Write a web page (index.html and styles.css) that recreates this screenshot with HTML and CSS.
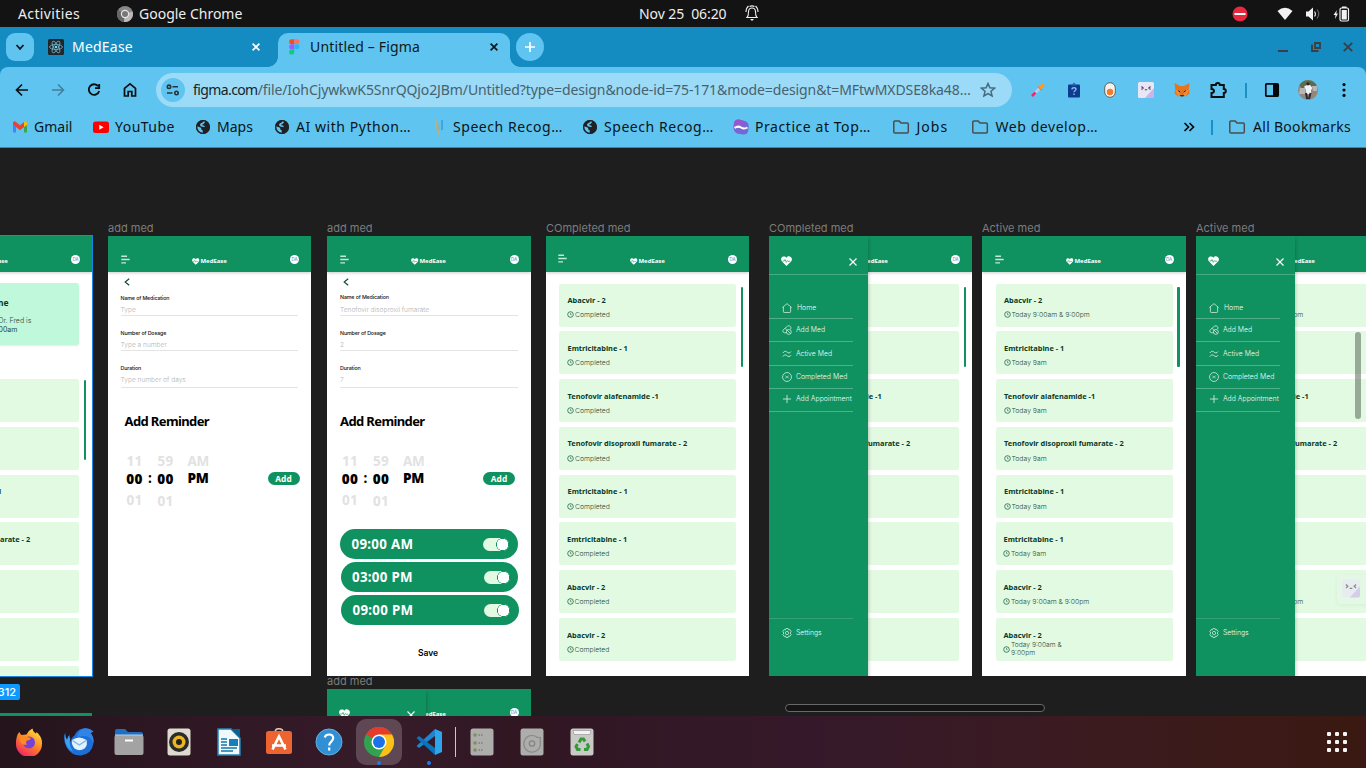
FILE: index.html
```
<!DOCTYPE html>
<html lang="en">
<head>
<meta charset="utf-8">
<title>Untitled – Figma</title>
<link rel="stylesheet" href="styles.css">
</head>
<body>
<svg class="defs" width="0" height="0" aria-hidden="true">
  <symbol id="heart" viewBox="0 0 12 11"><path d="M6 10.7 1.1 5.9C-.4 4 0 1.6 1.6.7 3.2-.2 5 .3 6 1.7 7-.3 9.2-.2 10.6.8c1.500 1 1.800 3.300.4 5z" fill="#fff"/><path d="M1.500 5.200h2l.9-1.700 1.300 3.200 1.200-2 .6.8h2.600" fill="none" stroke="#109160" stroke-width=".7"/></symbol>
  <symbol id="lines" viewBox="0 0 9 9"><path d="M.3 1.200h5.700M.3 4.500h8.400M.3 7.900h4.700" stroke="#c4e9d6" stroke-width="1.400" fill="none"/></symbol>
  <symbol id="clock" viewBox="0 0 7 7"><circle cx="3.500" cy="3.500" r="2.800" fill="none" stroke="#1f6347" stroke-width=".8"/><path d="M3.500 1.900v1.800h1.200" fill="none" stroke="#1f6347" stroke-width=".6"/></symbol>
  <symbol id="close" viewBox="0 0 8 8"><path d="m.5.5 7 7m0-7-7 7" stroke="#fff" stroke-width="1.200" fill="none"/></symbol>
  <symbol id="m-home" viewBox="0 0 11 11"><path d="M.4 5 5.500.7 10.600 5M1.500 4.200v5.300q0 .9.900.9h6.200q.9 0 .9-.9V4.200" fill="none" stroke="#d9f1e4" stroke-width=".85"/></symbol>
  <symbol id="m-pill" viewBox="0 0 11 11"><path d="M5 8.300q-2 1-3.500-.3-1.500-1.600.2-3L6.200 1.200q1.700-1 3 .4t.2 3M3.500 3.600l2.300 2.600" fill="none" stroke="#d9f1e4" stroke-width=".85"/><circle cx="7.500" cy="7.600" r="2.700" fill="none" stroke="#d9f1e4" stroke-width=".85"/><path d="m5.700 5.700 3.700 3.700" stroke="#d9f1e4" stroke-width=".8"/></symbol>
  <symbol id="m-wave" viewBox="0 0 11 11"><path d="M1 4.300C3 1.200 5 3 6 3.700s2.500 1.200 4-.9M1 8.300c2-3.100 4-1.300 5-.6s2.500 1.200 4-.9" fill="none" stroke="#d9f1e4" stroke-width=".95"/></symbol>
  <symbol id="m-done" viewBox="0 0 11 11"><circle cx="5.500" cy="5.500" r="4.900" fill="none" stroke="#d9f1e4" stroke-width=".85"/><path d="m3.700 4 1.500 1.500L3.700 7m3.600-3L5.800 5.500 7.300 7" fill="none" stroke="#d9f1e4" stroke-width=".8"/></symbol>
  <symbol id="m-plus" viewBox="0 0 11 11"><path d="M5.500 1v9M1 5.500h9" stroke="#d9f1e4" stroke-width=".9"/></symbol>
  <symbol id="m-gear" viewBox="0 0 11 11"><path d="m4.300.6 2.400 0 .5 1.500 1.600-.3 1.300 2-1.100 1.700 1.100 1.600-1.300 2.100-1.600-.4-.5 1.600H4.300l-.5-1.600-1.600.4L.9 7.100 2 5.500.9 3.800l1.300-2 1.600.3z" fill="none" stroke="#d9f1e4" stroke-width=".8"/><circle cx="5.500" cy="5.500" r="1.800" fill="none" stroke="#d9f1e4" stroke-width=".8"/></symbol>
  <symbol id="globe" viewBox="0 0 16 16"><circle cx="8" cy="8" r="7" fill="#202124"/><path d="M9.800 2.700C8.300 3 8.700 4 7.700 4.500S5.500 5 6 6.300s3 .1 3.300 1.400" fill="none" stroke="#5fc4f0" stroke-width="1.700"/><path d="M1.800 7.200 5.500 8.500q1.200.7.700 2l1.500.8v2.900A6.500 6.500 0 0 1 1.800 9z" fill="#5fc4f0"/><path d="M10 7.200q3.500-1.200 4.300.8-.3 3-2.300 4.600-.2-1.500-1.700-1.700z" fill="#202124"/><circle cx="8" cy="8" r="6.300" fill="none" stroke="#202124" stroke-width="1.300"/></symbol>
  <symbol id="folder" viewBox="0 0 18 16"><path d="M1.800 13V3q0-1 1-1h4.400l1.800 2h6.300q1 0 1 1v8q0 1-1 1H2.800q-1 0-1-1z" fill="none" stroke="#4d4d4d" stroke-width="1.500"/></symbol>
  <symbol id="face" viewBox="0 0 16 16"><rect width="16" height="16" rx="1.500" fill="#e9e6f6"/><path d="M16 6v8.500a1.500 1.500 0 0 1-1.500 1.500H7z" fill="#b488e0" opacity=".55"/><path d="m3.500 4.500 1.700 1.500-1.700 1.500M12.500 4.500 10.800 6l1.700 1.500M6.800 7.800h2.400" fill="none" stroke="#474554" stroke-width="1.100"/></symbol>
</svg>

<header class="topbar">
  <div class="top-left">
    <span class="activities">Activities</span>
    <svg width="16" height="16" viewBox="0 0 16 16"><circle cx="8" cy="8" r="8" fill="#888"/><path d="M8 8 1 4a8 8 0 0 0 5.500 12z" fill="#666"/><path d="M8 8l7.500-2.500A8 8 0 0 1 7 16z" fill="#b9b9b9"/><circle cx="8" cy="8" r="4.200" fill="#e8e8e8"/><circle cx="8" cy="8" r="3" fill="#777"/></svg>
    <span class="app-name">Google Chrome</span>
  </div>
  <div class="top-mid"><span>Nov 25&nbsp; 06:20</span>
    <svg width="14" height="16" viewBox="0 0 14 16"><path d="M2 12.500c1.500-1.500 1.500-3 1.500-5.500C3.500 4 5 3 7 3s3.500 1 3.500 4c0 2.500 0 4 1.500 5.500zM1 7c0-3 1-4.800 2.500-6M13 7c0-3-1-4.800-2.500-6M4.500 1.600q2.500-1.400 5 0" fill="none" stroke="#eee" stroke-width="1.100"/><path d="M5 14h4l-2 2z" fill="#eee"/></svg>
  </div>
  <div class="top-right">
    <svg width="16" height="16" viewBox="0 0 16 16"><circle cx="8" cy="8" r="7.500" fill="#e6293f"/><path d="M2.500 8h11" stroke="#fff" stroke-width="2"/></svg>
    <svg class="wifi" width="16" height="14" viewBox="0 0 16 14"><path d="M.5 4Q8-2.500 15.500 4L8 13z" fill="#f2f2f2"/></svg>
    <svg class="vol" width="16" height="14" viewBox="0 0 16 14"><path d="M1 4.500h2.500L8 .5v13L3.500 9.500H1z" fill="#f2f2f2"/><path d="M9.500 4.500q2 2.500 0 5" fill="none" stroke="#ddd" stroke-width="1.200"/><path d="M12 2.500q3.500 4.500 0 9" fill="none" stroke="#666" stroke-width="1.200"/></svg>
    <svg class="batt" width="17" height="16" viewBox="0 0 17 16"><path d="M4 4 .5 9h2L2 13l3-5.500H3.200z" fill="#f2f2f2"/><rect x="7" y="2" width="8.500" height="13" rx="1.500" fill="none" stroke="#f2f2f2" stroke-width="1.200"/><path d="M9 .5h4.500v1.500H9zM8.700 4h5.100v9.500H8.700z" fill="#f2f2f2"/></svg>
  </div>
</header>

<div class="tabstrip">
  <div class="tab-search"><svg width="12" height="12" viewBox="0 0 12 12"><path d="m2.500 4 3.500 3.800L9.500 4" fill="none" stroke="#0b1a20" stroke-width="1.800"/></svg></div>
  <div class="tab">
    <svg width="16" height="16" viewBox="0 0 16 16"><rect width="16" height="16" rx="1.500" fill="#22262b"/><g fill="none" stroke="#6fb6cc" stroke-width=".8"><ellipse cx="8" cy="8" rx="6.500" ry="2.500"/><ellipse cx="8" cy="8" rx="6.500" ry="2.500" transform="rotate(60 8 8)"/><ellipse cx="8" cy="8" rx="6.500" ry="2.500" transform="rotate(120 8 8)"/></g><circle cx="8" cy="8" r="1.300" fill="#7ed4ee"/></svg>
    <span class="tab-title medease">MedEase</span>
    <svg width="8" height="8" viewBox="0 0 8 8"><path d="m.6.6 6.800 6.800m0-6.800L.6 7.400" stroke="#fff" stroke-width="1.600"/></svg>
  </div>
  <div class="tab active">
    <svg width="11" height="16" viewBox="0 0 11 16"><path d="M2.700.3h2.600v5H2.700a2.500 2.500 0 0 1 0-5z" fill="#f24e1e"/><path d="M5.300.3H8a2.500 2.500 0 0 1 0 5H5.300z" fill="#ff7262"/><path d="M2.700 5.300h2.600v5H2.700a2.500 2.500 0 0 1 0-5z" fill="#a259ff"/><circle cx="7.900" cy="7.800" r="2.500" fill="#1abcfe"/><path d="M2.700 10.300h2.600v2.600a2.600 2.600 0 1 1-2.600-2.600z" fill="#0acf83"/></svg>
    <span class="tab-title figma">Untitled – Figma</span>
    <svg width="8" height="8" viewBox="0 0 8 8"><path d="m.6.6 6.800 6.800m0-6.800L.6 7.400" stroke="#0b1a20" stroke-width="1.700"/></svg>
  </div>
  <div class="new-tab"><svg width="10" height="10" viewBox="0 0 10 10"><path d="M5 0v10M0 5h10" stroke="#fff" stroke-width="1.700"/></svg></div>
  <div class="win">
    <svg width="10" height="10" viewBox="0 0 10 10"><path d="M0 9h10" stroke="#3a3f44" stroke-width="2"/></svg>
    <svg width="10" height="10" viewBox="0 0 10 10"><path d="M4 1h5v5H4zM1 2.500V9h6.500" fill="none" stroke="#3a3f44" stroke-width="1.800"/></svg>
    <svg width="10" height="10" viewBox="0 0 10 10"><path d="m.8.8 8.400 8.400m0-8.400L.8 9.200" stroke="#3a3f44" stroke-width="1.900"/></svg>
  </div>
</div>

<div class="chrome">
  <div class="toolbar">
    <svg class="tool" viewBox="0 0 16 16"><path d="M14 8H2.800M8 2.500 2.500 8 8 13.500" fill="none" stroke="#0a0f12" stroke-width="1.700"/></svg>
    <svg class="tool" viewBox="0 0 16 16"><path d="M2 8h11.200M8 2.500 13.500 8 8 13.500" fill="none" stroke="#417e9b" stroke-width="1.500"/></svg>
    <svg class="tool" viewBox="0 0 16 16"><path d="M12.300 4.300A5.300 5.300 0 1 0 13.200 9M13.200 2v4.200H9" fill="none" stroke="#0a0f12" stroke-width="1.800"/></svg>
    <svg class="tool" viewBox="0 0 16 16"><path d="M2.500 14V6.300L8 1.800l5.500 4.500V14h-3.700V9.500H6.200V14z" fill="none" stroke="#0a0f12" stroke-width="1.700"/></svg>
    <div class="omnibox">
      <div class="site"><svg width="14" height="12" viewBox="0 0 14 12"><g fill="none" stroke="#26343c" stroke-width="1.600"><circle cx="3" cy="2.800" r="1.700"/><path d="M6.500 2.800H12M1 9h5.500"/><circle cx="10.500" cy="9" r="1.700"/></g></svg></div>
      <div class="url"><b>figma.com</b><span>/file/IohCjywkwK5SnrQQjo2JBm/Untitled?type=design&amp;node-id=75-171&amp;mode=design&amp;t=MFtwMXDSE8ka48…</span></div>
      <svg class="star" width="16" height="16" viewBox="0 0 16 16"><path d="m8 1.500 1.900 4.300 4.700.4-3.600 3.100 1.100 4.600L8 11.500l-4.100 2.400L5 9.300 1.400 6.200l4.700-.4z" fill="none" stroke="#466a7c" stroke-width="1.500"/></svg>
    </div>
    <div class="exts">
      <svg class="tool" viewBox="0 0 16 16"><path d="m4 12 5.500-5.500" stroke="#a9d3f7" stroke-width="3"/><path d="m2 14 3.500-3.500" stroke="#ec2a6a" stroke-width="2.600"/><path d="m8.300 4.500 3.500 3.500" stroke="#f2793a" stroke-width="2"/><path d="m10.800 5.200 1.900-1.900" stroke="#ff9a1f" stroke-width="3.600" stroke-linecap="round"/></svg>
      <svg class="tool" viewBox="0 0 16 16"><rect x="2" y="2.500" width="12" height="13" rx="1" fill="#0c3c8e"/><path d="M5 3.500 8 .5l3 3z" fill="#2e66b8"/><path d="M6 7.500q0-1.700 2-1.700t2 1.500c0 1.400-2 1.500-2 3M8 11.500v1.500" stroke="#8db6ef" stroke-width="1.400" fill="none"/></svg>
      <svg class="tool" viewBox="0 0 16 16"><rect x="2.700" y=".7" width="10.600" height="14.600" rx="5.300" fill="#f4f2ef" stroke="#66625f" stroke-width="1"/><circle cx="8" cy="10" r="3.200" fill="#f47b2a"/></svg>
      <svg class="tool"><use href="#face"/></svg>
      <svg class="tool" viewBox="0 0 16 16"><path d="M.5 1 6 4h4l5.500-3-.7 6.500.7 4L12 14.500 10 14H6l-2 .5L.5 11.500l.7-4z" fill="#e5761f"/><path d="M1.200 7.500 5 9l1 4-2 1.500M14.800 7.500 11 9l-1 4 2 1.500" fill="#f28c38"/><path d="m4 8.500 2.200 1.500M12 8.500 9.800 10" stroke="#3a2a1c"/><path d="M6 13h4l-.7 1.500H6.700z" fill="#3b2c22"/></svg>
      <svg class="tool puzzle" viewBox="0 0 18 18"><path d="M2.500 4h4.300a2 2 0 1 1 4 0h4v4a2 2 0 1 1 0 4v4H2.500v-4q2.500-.3 2.500-2t-2.500-2z" fill="none" stroke="#0a0f12" stroke-width="2"/></svg>
    </div>
    <i class="sep"></i>
    <svg class="tool side" viewBox="0 0 16 16"><rect x="1.800" y="1.800" width="12.400" height="12.400" rx="1" fill="none" stroke="#05090b" stroke-width="1.700"/><path d="M9 2h5v12H9z" fill="#05090b"/></svg>
    <svg class="me" width="20" height="20" viewBox="0 0 20 20"><circle cx="10" cy="10" r="10" fill="#93877c"/><path d="M1.500 5a10 10 0 0 1 17 0L16 9H4z" fill="#5b6c50"/><path d="M2 8h5v6H1zM14 6h5v5h-4z" fill="#b9b4b7"/><path d="m6 6.500 3-1.500h3l2.500 3-1.500 2v4H8l-.3-4.500z" fill="#eef2f5"/><circle cx="10" cy="3.800" r="1.600" fill="#33261f"/><path d="m8 13 1.200 6M12.500 13l-1.500 6" stroke="#262a35" stroke-width="2"/></svg>
    <svg class="tool" viewBox="0 0 16 16"><g fill="#05090b"><circle cx="8" cy="2.600" r="1.600"/><circle cx="8" cy="8" r="1.600"/><circle cx="8" cy="13.400" r="1.600"/></g></svg>
  </div>
  <nav class="bookmarks">
    <a class="bk gmail"><svg viewBox="0 0 16 16"><path d="M1 3.500v10h3V8z" fill="#4285f4"/><path d="M15 3.500v10h-3V8z" fill="#34a853"/><path d="M1 5V3.500Q2.500 1.500 4 3l4 3.200L12 3v5l-4 3.200L4 8z" fill="#ea4335"/><path d="M12 3q2-1.500 3 .7V6l-3 2z" fill="#fbbc04"/></svg>Gmail</a>
    <a class="bk yt"><svg viewBox="0 0 16 16"><rect y="2.500" width="16" height="11.500" rx="2.500" fill="#f00"/><path d="M6.300 5.700v5l4.300-2.500z" fill="#fff"/></svg>YouTube</a>
    <a class="bk maps"><svg><use href="#globe"/></svg>Maps</a>
    <a class="bk long"><svg><use href="#globe"/></svg>AI with Python…</a>
    <a class="bk long"><svg viewBox="0 0 16 16"><path d="M5 1v9M8 6v10" stroke="#d6aa63" stroke-width="1.400"/><path d="M8 6v5" stroke="#8bb1a8" stroke-width="1.400"/><path d="M11 1v10" stroke="#2b9ddb" stroke-width="1.400"/></svg>Speech Recog…</a>
    <a class="bk long"><svg><use href="#globe"/></svg>Speech Recog…</a>
    <a class="bk long"><svg viewBox="0 0 16 16"><path d="M1 4Q2 0 6 .5l7 2Q16 4 15.700 8l-.5 4Q14 16 10 15.500l-6-1Q1 13 .5 9z" fill="#7467d6"/><path d="M1 4Q2 0 6 .5l7 2-5 4.500-7.500 2z" fill="#9658cf"/><path d="M1.500 9q3.500-2.500 6.500-.5t6.500 0" stroke="#fff" stroke-width="2" fill="none"/></svg>Practice at Top…</a>
    <a class="bk dir jobs"><svg><use href="#folder"/></svg>Jobs</a>
    <a class="bk dir long"><svg><use href="#folder"/></svg>Web develop…</a>
    <svg class="more" viewBox="0 0 12 12"><path d="m1.500 2 4 4-4 4M6.500 2l4 4-4 4" fill="none" stroke="#05090b" stroke-width="1.700"/></svg>
    <i class="sep"></i>
    <a class="bk dir all"><svg><use href="#folder"/></svg>All Bookmarks</a>
  </nav>
</div>

<main class="canvas">
  <!-- selected frame, mostly scrolled out to the left -->
  <section class="frame f0">
    <div class="bar"><span></span><span class="brand"><svg><use href="#heart"/></svg>MedEase</span><span class="ava">DA</span></div>
    <div class="notice"><h4>ne</h4><p>Dr. Fred is</p><p class="time">00am</p></div>
    <div class="list low">
      <article></article><article></article><article><h3>Tenofovir alafenamide -1</h3></article><article><h3>Tenofovir disoproxil fumarate - 2</h3></article><article></article><article></article><article></article>
    </div>
    <i class="thumb"></i>
  </section>
  <span class="badge">312</span>
  <i class="frame f8"></i>

  <span class="name n1">add med</span>
  <section class="frame f1">
    <div class="bar"><svg class="burger"><use href="#lines"/></svg><span class="brand"><svg><use href="#heart"/></svg>MedEase</span><span class="ava">DA</span></div>
    <div class="form">
      <svg class="back" viewBox="0 0 6 8"><path d="M5.200.8 1.200 4l4 3.200" fill="none" stroke="#174a36" stroke-width="1.200"/></svg>
      <label class="field"><b>Name of Medication</b><span>Type</span></label>
      <label class="field"><b>Number of Dosage</b><span>Type a number</span></label>
      <label class="field last"><b>Duration</b><span>Type number of days</span></label>
      <h2>Add Reminder</h2>
      <div class="picker">
        <div class="col"><s>11</s><b>00</b><s>01</s></div><div class="colon">:</div>
        <div class="col"><s>59</s><b>00</b><s class="dn">01</s></div>
        <div class="col ap"><s>AM</s><b>PM</b></div><span class="add">Add</span>
      </div>
    </div>
  </section>

  <span class="name n2">add med</span>
  <section class="frame f2">
    <div class="bar"><svg class="burger"><use href="#lines"/></svg><span class="brand"><svg><use href="#heart"/></svg>MedEase</span><span class="ava">DA</span></div>
    <div class="form">
      <svg class="back" viewBox="0 0 6 8"><path d="M5.200.8 1.200 4l4 3.200" fill="none" stroke="#174a36" stroke-width="1.200"/></svg>
      <label class="field"><b>Name of Medication</b><span>Tenofovir disoproxil fumarate</span></label>
      <label class="field"><b>Number of Dosage</b><span>2</span></label>
      <label class="field last"><b>Duration</b><span>7</span></label>
      <h2>Add Reminder</h2>
      <div class="picker">
        <div class="col"><s>11</s><b>00</b><s>01</s></div><div class="colon">:</div>
        <div class="col"><s>59</s><b>00</b><s class="dn">01</s></div>
        <div class="col ap"><s>AM</s><b>PM</b></div><span class="add">Add</span>
      </div>
      <div class="alarms">
        <div class="alarm">09:00 AM<i></i></div><div class="alarm">03:00 PM<i></i></div><div class="alarm">09:00 PM<i></i></div>
      </div>
      <div class="save">Save</div>
    </div>
  </section>

  <span class="name n3">COmpleted med</span>
  <section class="frame f3">
    <div class="bar"><svg class="burger up"><use href="#lines"/></svg><span class="brand"><svg><use href="#heart"/></svg>MedEase</span><span class="ava">DA</span></div>
    <div class="list">
      <article><h3>Abacvir - 2</h3><p><svg><use href="#clock"/></svg>Completed</p></article>
      <article><h3>Emtricitabine - 1</h3><p><svg><use href="#clock"/></svg>Completed</p></article>
      <article><h3>Tenofovir alafenamide -1</h3><p><svg><use href="#clock"/></svg>Completed</p></article>
      <article><h3>Tenofovir disoproxil fumarate - 2</h3><p><svg><use href="#clock"/></svg>Completed</p></article>
      <article><h3>Emtricitabine - 1</h3><p><svg><use href="#clock"/></svg>Completed</p></article>
      <article class="nudge"><h3>Emtricitabine - 1</h3><p><svg><use href="#clock"/></svg>Completed</p></article>
      <article class="nudge"><h3>Abacvir - 2</h3><p><svg><use href="#clock"/></svg>Completed</p></article>
      <article class="nudge"><h3>Abacvir - 2</h3><p><svg><use href="#clock"/></svg>Completed</p></article>
    </div>
    <i class="thumb"></i>
  </section>

  <span class="name n4">COmpleted med</span>
  <section class="frame f4">
    <div class="bar"><span></span><span class="brand"><svg><use href="#heart"/></svg>MedEase</span><span class="ava">DA</span></div>
    <div class="list">
      <article></article><article></article><article><h3>Tenofovir alafenamide -1</h3></article><article><h3>Tenofovir disoproxil fumarate - 2</h3></article><article></article><article></article><article></article><article></article>
    </div>
    <i class="thumb"></i>
    <aside class="drawer">
      <div class="dhead"><svg class="dh"><use href="#heart"/></svg><svg class="dx"><use href="#close"/></svg></div>
      <a class="home"><svg><use href="#m-home"/></svg>Home</a><a><svg><use href="#m-pill"/></svg>Add Med</a><a class="act"><svg><use href="#m-wave"/></svg>Active Med</a><a><svg><use href="#m-done"/></svg>Completed Med</a><a class="appt"><svg><use href="#m-plus"/></svg>Add Appointment</a>
      <div class="settings"><svg><use href="#m-gear"/></svg>Settings</div>
    </aside>
  </section>

  <span class="name n5">Active med</span>
  <section class="frame f5">
    <div class="bar"><svg class="burger"><use href="#lines"/></svg><span class="brand"><svg><use href="#heart"/></svg>MedEase</span><span class="ava">DA</span></div>
    <div class="list">
      <article><h3>Abacvir - 2</h3><p><svg><use href="#clock"/></svg>Today 9:00am &amp; 9:00pm</p></article>
      <article><h3>Emtricitabine - 1</h3><p><svg><use href="#clock"/></svg>Today 9am</p></article>
      <article><h3>Tenofovir alafenamide -1</h3><p><svg><use href="#clock"/></svg>Today 9am</p></article>
      <article><h3>Tenofovir disoproxil fumarate - 2</h3><p><svg><use href="#clock"/></svg>Today 9am</p></article>
      <article><h3>Emtricitabine - 1</h3><p><svg><use href="#clock"/></svg>Today 9am</p></article>
      <article class="nudge"><h3>Emtricitabine - 1</h3><p><svg><use href="#clock"/></svg>Today 9am</p></article>
      <article class="nudge"><h3>Abacvir - 2</h3><p><svg><use href="#clock"/></svg>Today 9:00am &amp; 9:00pm</p></article>
      <article class="nudge two"><h3>Abacvir - 2</h3><p><svg><use href="#clock"/></svg><span>Today 9:00am &amp;<br>9:00pm</span></p></article>
    </div>
    <i class="thumb"></i>
  </section>

  <span class="name n6">Active med</span>
  <section class="frame f6">
    <div class="bar"><span></span><span class="brand"><svg><use href="#heart"/></svg>MedEase</span><span class="ava">DA</span></div>
    <div class="list">
      <article><h3></h3><p><svg><use href="#clock"/></svg>Today 9:00am &amp; 9:00pm</p></article><article></article><article><h3>Tenofovir alafenamide -1</h3></article><article><h3>Tenofovir disoproxil fumarate - 2</h3></article><article></article><article></article><article><h3></h3><p><svg><use href="#clock"/></svg>Today 9:00am &amp; 9:00pm</p></article><article></article>
    </div>
    <aside class="drawer">
      <div class="dhead"><svg class="dh"><use href="#heart"/></svg><svg class="dx"><use href="#close"/></svg></div>
      <a class="home"><svg><use href="#m-home"/></svg>Home</a><a><svg><use href="#m-pill"/></svg>Add Med</a><a class="act"><svg><use href="#m-wave"/></svg>Active Med</a><a><svg><use href="#m-done"/></svg>Completed Med</a><a class="appt"><svg><use href="#m-plus"/></svg>Add Appointment</a>
      <div class="settings"><svg><use href="#m-gear"/></svg>Settings</div>
    </aside>
  </section>

  <span class="name n7">add med</span>
  <section class="frame f7">
    <div class="bar"><span></span><span class="brand"><svg><use href="#heart"/></svg>MedEase</span><span class="ava">DA</span></div>
    <aside class="drawer"><div class="dhead"><svg class="dh"><use href="#heart"/></svg><svg class="dx"><use href="#close"/></svg></div></aside>
  </section>

  <i class="vscroll"></i><i class="hscroll"></i>
  <div class="float"><svg><use href="#face"/></svg></div>
</main>

<footer class="dock">
  <span class="app"><svg viewBox="0 0 28 28"><defs><linearGradient id="ff" x1=".8" y1="0" x2=".2" y2="1"><stop offset="0" stop-color="#ffe14a"/><stop offset=".45" stop-color="#ff8a1f"/><stop offset="1" stop-color="#f0196e"/></linearGradient></defs><path d="M2 8q1-3 2.500-4 .5 2 2 3l5-.5Q14 2 17.500.5q0 3 3 5 1-.5 1-1.500 6 5 5.500 12a13 13 0 0 1-26 0Q1 11 2 8z" fill="url(#ff)"/><circle cx="14" cy="14.500" r="6" fill="#7542d8"/><path d="M4 9q5-2 8 0l4 1q-1 2.500-4 2.500-2 2 0 4Q6 18 5 12z" fill="#ff8a22"/></svg></span>
  <span class="app"><svg class="w30" viewBox="0 0 30 28"><path d="M1 5Q-1.500 13 3 20q5 8 14 7.500Q28 26 29.500 15q.5-6-3-10l3-1.500Q24-.5 19 .5q-6 1-8.500 7Q7 10 6.500 14 5 11 5.500 7 3.500 9 3 12 1 9 1 5z" fill="#1b6fd6"/><path d="M13 9Q14 2 20 .5q5-1 9.500 3l-3 1.500q3.500 4 3 10-4-8-10-7-4 .5-6.500 1z" fill="#3184e4"/><path d="M1 5q-2 13 8 19-5-7-2.500-14Q5 11 5.500 7 3.500 9 3 12 1 9 1 5z" fill="#3aa2f2"/><path d="M8 12q7-5 14.500 0 1.500 5-2 8.500-5 3.500-10 0-3.500-4-2.500-8.500z" fill="#e3f1fc"/><path d="m8.500 12.500 6.800 4.500 6.800-4.500" stroke="#7db5ea" stroke-width="1.400" fill="none"/></svg></span>
  <span class="app"><svg class="w30" viewBox="0 0 30 28"><path d="M1 3q0-2 2-2h8l3 3h13q2 0 2 2v8H1z" fill="#1e6ec4"/><rect x=".5" y="7" width="29" height="20" rx="2" fill="#a3a3a3"/><path d="M1 7h28" stroke="#bcd0e2"/><path d="M11 12.500h8" stroke="#fff" stroke-width="2"/></svg></span>
  <span class="app"><svg viewBox="0 0 28 28"><rect x="2.500" y=".5" width="23" height="27" rx="2.500" fill="#dfdad0"/><circle cx="14" cy="14" r="10" fill="#2b2b2b"/><circle cx="14" cy="14" r="6.500" fill="#edb621"/><circle cx="14" cy="14" r="3" fill="#222"/></svg></span>
  <span class="app"><svg viewBox="0 0 28 28"><path d="M3 1h13l9 9v17H3z" fill="#f1f8fc" stroke="#2384b8" stroke-width="1.500"/><path d="M16 1h9v9z" fill="#0d5f92"/><path d="M6 11h6M6 14h6M6 17h6M6 20h16M6 23h12" stroke="#1576aa" stroke-width="1.500"/><path d="M14 11h9v7h-9z" fill="#147fb8"/></svg></span>
  <span class="app"><svg viewBox="0 0 28 28"><path d="M10 4.500Q10 .7 14 .7t4 3.800" fill="none" stroke="#e6c6a6" stroke-width="1.500"/><rect x="1" y="3" width="26" height="23" rx="2.500" fill="#ee6430"/><path d="m7.500 21.500 6.500-13 6.500 13M7 17.500h14" stroke="#fff" stroke-width="2.600" fill="none"/></svg></span>
  <span class="app"><svg viewBox="0 0 28 28"><circle cx="14" cy="14" r="13" fill="#318fd4" stroke="#64afe0"/><path d="M9.800 9.500q.5-3 4.400-3 4 0 4 3.600c0 3.500-4 3.500-4 7.400M14.200 19.500v3" fill="none" stroke="#fff" stroke-width="2.200"/></svg></span>
  <span class="app on"><svg viewBox="0 0 30 30"><circle cx="15" cy="15" r="15" fill="#31a350"/><path d="M15 15 2 7.500A15 15 0 0 1 28 7.500z" fill="#e33b2e"/><path d="M15 7.500h13A15 15 0 0 1 15 30l6.500-11.500z" fill="#fbc116"/><circle cx="15" cy="15" r="7.500" fill="#fff"/><circle cx="15" cy="15" r="6" fill="#1b72e8"/></svg><i class="run"></i></span>
  <span class="app"><svg viewBox="0 0 28 28"><path d="M20 1 27 4v20l-7 3z" fill="#2ba6ec"/><path d="M20 1 1.500 18l2.500 2L20 8z" fill="#1c86d0"/><path d="M20 27 1.500 10 4 8l16 12z" fill="#0c72bb"/></svg><i class="run"></i></span>
  <i class="dsep"></i>
  <span class="app"><svg viewBox="0 0 28 28"><rect x="2.500" y=".5" width="23" height="27" rx="2.500" fill="#adadab"/><g fill="#7d9153"><circle cx="7" cy="7" r="1.800"/><circle cx="7" cy="15" r="1.800"/><circle cx="7" cy="22" r="1.800"/></g><path d="M10.500 7h4M10.500 15h4M10.500 22h4" stroke="#666" stroke-width="1.200" stroke-dasharray="1.500 1"/></svg></span>
  <span class="app"><svg viewBox="0 0 28 28"><rect x="2.500" y=".5" width="23" height="27" rx="2.500" fill="#adadab"/><path d="M19.500 9.500a8.300 8.300 0 1 0 2.800 5V9.500h-4" fill="none" stroke="#8a8a8a" stroke-width="1.200"/><circle cx="14" cy="15.500" r="2.700" fill="none" stroke="#858585" stroke-width="1.300"/></svg></span>
  <span class="app"><svg viewBox="0 0 28 28"><rect x="2.500" y=".5" width="23" height="27" rx="2.500" fill="#c9c9c6"/><path d="M5 2.500h18l-1 4H6z" fill="#f3f3f3" stroke="#999" stroke-width=".7"/><g fill="none" stroke="#35993b" stroke-width="3"><path d="m11 14.500 2-3.500h2.500l1.500 2.500M19 15.500l1.500 3-1.500 3h-3M12.500 21.500H9.500l-1.500-3 1.500-2.500"/></g></svg></span>
  <svg class="grid" width="20" height="20" viewBox="0 0 20 20"><g fill="#f5f5f5"><rect x="0" y="0" width="4" height="4" rx="1"/><rect x="8" y="0" width="4" height="4" rx="1"/><rect x="16" y="0" width="4" height="4" rx="1"/><rect x="0" y="8" width="4" height="4" rx="1"/><rect x="8" y="8" width="4" height="4" rx="1"/><rect x="16" y="8" width="4" height="4" rx="1"/><rect x="0" y="16" width="4" height="4" rx="1"/><rect x="8" y="16" width="4" height="4" rx="1"/><rect x="16" y="16" width="4" height="4" rx="1"/></g></svg>
</footer>
</body>
</html>
```
FILE: styles.css
```
* { box-sizing: border-box; margin: 0; padding: 0; }
body {
  width: 1366px; height: 768px; overflow: hidden;
  display: flex; flex-direction: column;
  font: 14px/20px "Noto Sans", "Open Sans", sans-serif;
  background: #1e1e1e;
}
svg { display: block; flex: none; }
.defs { position: absolute; }

/* desktop top bar */
.topbar { height: 27px; flex: none; background: #131313; color: #eee; display: grid; grid-template-columns: 639px 1fr 134px; align-items: center; }
.top-left, .top-mid, .top-right { display: flex; align-items: center; }
.top-left { padding-left: 18px; }
.activities { width: 99px; letter-spacing: .37px; }
.app-name { margin-left: 6px; }
.top-mid { letter-spacing: -.09px; }
.top-mid svg { margin-left: 18px; margin-top: -1px; }
.wifi { margin-left: 29px; }
.vol { margin-left: 12px; }
.batt { margin-left: 12px; }

/* tab strip */
.tabstrip { height: 40px; flex: none; background: #158cc1; display: flex; align-items: flex-end; color: #fff; }
.tab-search, .new-tab { width: 28px; height: 28px; margin: 0 0 6px 6px; border-radius: 9px; background: #5fc4f0; display: grid; place-items: center; flex: none; }
.new-tab { border-radius: 14px; }
.tab { height: 34px; padding: 0 18px 6px 14px; display: flex; align-items: center; width: 244px; }
.tab-title { flex: 1; margin-left: 8px; }
.medease { letter-spacing: .22px; }
.figma { letter-spacing: .16px; }
.tab.active { position: relative; width: 232px; padding: 0 12px 6px 11px; background: #5fc4f0; color: #0b1a20; border-radius: 10px 10px 0 0; }
.tab.active .tab-title { margin-left: 10px; }
.tab.active::before, .tab.active::after { content: ""; position: absolute; bottom: 0; width: 10px; height: 10px; }
.tab.active::before { left: -10px; background: radial-gradient(circle at 0 0, transparent 9.500px, #5fc4f0 10px); }
.tab.active::after { right: -10px; background: radial-gradient(circle at 100% 0, transparent 9.500px, #5fc4f0 10px); }
.win { margin-left: auto; display: flex; gap: 22.500px; padding: 0 13px 15px 0; }

/* toolbar and bookmarks */
.chrome { height: 81px; flex: none; background: #158cc1; position: relative; border-bottom: 1px solid #3b87a9; }
.chrome::before { content: ""; position: absolute; inset: 0; background: #5fc4f0; border-radius: 8px 8px 0 0; }
.toolbar { position: relative; height: 46px; padding-left: 14px; display: flex; align-items: center; gap: 20px; }
.tool { width: 16px; height: 16px; }
.omnibox { width: 856px; height: 34px; margin-left: -2px; border-radius: 17px; background: #9bdbf7; display: flex; align-items: center; padding-left: 5px; }
.site { width: 24px; height: 24px; border-radius: 50%; background: #5fc4f0; display: grid; place-items: center; }
.url { width: 787px; margin-left: 8px; white-space: nowrap; color: #46616f; letter-spacing: -.104px; }
.url b { font-weight: 400; color: #14242c; letter-spacing: -.6px; }
.exts { display: flex; gap: 20px; margin-left: -2px; }
.puzzle { width: 18px; height: 18px; margin: -1px; }
.sep { width: 2px; height: 15px; background: #1c8fc4; }
.toolbar .sep { margin-left: -1px; }
.side { margin-left: -3px; }
.me { margin: 0 -2px; }
.bookmarks { position: relative; height: 28px; padding-left: 12px; display: grid; grid-template-columns: 81px 102px 79px 157px 151px 151px 159px 79px 212px 29px 17px 1fr; align-items: center; color: #0a1418; }
.bk { display: flex; align-items: center; gap: 6px; white-space: nowrap; }
.bk svg { width: 16px; height: 16px; }
.bk.dir svg { width: 18px; }
.yt { letter-spacing: .48px; }
.long { letter-spacing: .56px; }
.jobs { letter-spacing: 1px; }
.all { letter-spacing: .29px; }
.jobs, .dir.long { gap: 6.500px; }
.more { width: 12px; height: 12px; }
.bookmarks .sep { margin-left: -1px; }
.bookmarks .all { margin-left: -1px; gap: 7px; }

/* design canvas */
.canvas { position: relative; flex: 1; overflow: hidden; background: #1e1e1e; }
.name { position: absolute; top: 73px; font: 11px/14px Inter, sans-serif; color: #7d7d7d; }
.n1 { left: 108px; } .n2 { left: 327px; } .n3 { left: 546px; } .n4 { left: 769px; } .n5 { left: 982px; } .n6 { left: 1196px; } .n7 { left: 327px; top: 526px; }
.frame { position: absolute; top: 88px; width: 203px; height: 440px; background: #fff; overflow: hidden; }
.f0 { left: -111px; outline: 1.500px solid #1787e0; }
.f1 { left: 108px; } .f2 { left: 327px; width: 203.500px; } .f3 { left: 546px; } .f4 { left: 769px; } .f5 { left: 982px; width: 203.500px; } .f6 { left: 1196px; }
.f7 { left: 327px; top: 541px; width: 203.500px; }
.f8 { left: -111px; top: 565px; background: #109160; }
.badge { position: absolute; left: -4px; top: 536px; width: 24px; height: 16px; padding-right: 4px; border-radius: 2px; background: #0d99ff; color: #fff; text-align: right; font: 500 11px/16px Inter, sans-serif; }

.bar { position: relative; height: 36px; padding: 16px 12px 0 13px; background: #109160; box-shadow: 0 1px 3px rgba(0, 0, 0, .2); display: grid; grid-template-columns: 71px 1fr 9px; align-items: start; }
.burger { width: 9px; height: 9px; margin-top: 2.500px; }
.burger.up { margin: 1.500px 0 0 -1px; }
.brand { display: flex; align-items: center; gap: 1px; margin-top: 4.500px; font: bold 6px/9px "Noto Sans", sans-serif; letter-spacing: -.05px; color: #fff; }
.brand svg { width: 7.500px; height: 7px; }
.ava { width: 9px; height: 9px; margin-top: 3px; border-radius: 50%; background: #fff; color: #3f87ca; text-align: center; font: 4.500px/9px Inter, sans-serif; }

.list { padding: 11.500px 13px 0; display: flex; flex-direction: column; gap: 4.800px; }
.list article { height: 43px; flex: none; padding: 11.500px 0 0 8.500px; background: #e2fae2; border-radius: 2px; white-space: nowrap; }
.list .nudge { padding-left: 8px; }
.list h3 { height: 11px; font: bold 7.400px/11px "Noto Sans", sans-serif; color: #0a3b29; }
.list p { display: flex; align-items: center; gap: 1px; margin: 3.400px 0 0 -.5px; font: 300 6.850px/11px Inter, sans-serif; color: #2a4a3a; }
.list p svg { width: 7px; height: 7px; }
.list .two p { margin-top: .4px; font-size: 6.700px; line-height: 8.500px; }
.f5 .list { padding-left: 13.500px; }
.thumb { position: absolute; left: 194.500px; top: 51px; width: 2.500px; height: 80px; border-radius: 1px; background: #109160; }
.f5 .thumb { left: 195px; }
.low { padding-top: 34px; }
.f0 .thumb { top: 144px; }
.notice { margin: 11px 13px 0; height: 62px; padding: 14px 0 0 98px; border-radius: 3px; background: #c0f8db; box-shadow: 0 1px 2px rgba(0, 0, 0, .1); color: #2a4a3a; }
.notice h4 { margin-left: -2px; font: bold 8.500px/12px "Noto Sans", sans-serif; color: #0a3b29; }
.notice p { margin-top: 8px; margin-left: -1.500px; font: 300 7px/8.500px Inter, sans-serif; white-space: nowrap; }
.notice .time { margin-top: 0; font-weight: 400; }

/* medication form */
.form { padding-left: 12.500px; }
.back { width: 6px; height: 8px; margin: 6px 0 0 3px; }
.field { display: block; width: 177.500px; height: 35.300px; padding-top: 12px; border-bottom: 1px solid #e4e4e4; }
.back + .field { height: 29.500px; padding-top: 7px; }
.field b { display: block; font: 500 5.300px/10px Inter, sans-serif; letter-spacing: -.12px; color: #111; }
.field span { display: block; margin-top: 2px; font: 300 6.600px/11px Inter, sans-serif; color: #b4b4b4; }
.field.last { height: 37px; }
.f2 .form { padding-left: 13px; }
.f2 .back + .field { padding-top: 6px; }
.f2 .back + .field span { margin-top: 3px; }
.form h2 { margin: 23px 0 0 4px; font: bold 13px/20px "Noto Sans", sans-serif; letter-spacing: -.62px; }
.picker { height: 60px; margin: 20px 0 0 5px; display: grid; grid-template-columns: 18px 13px 18px 13px 80px 32px; font: bold 13.500px/20px "Noto Sans", sans-serif; }
.col { display: grid; grid-template-rows: 18px 21px 20px; text-align: center; letter-spacing: .4px; }
.col s { text-decoration: none; color: #e2e2e2; }
.col.ap { grid-column: 5; text-align: left; letter-spacing: -.3px; }
.col.ap b { margin-top: -1px; }
.dn { margin-top: 1px; }
.colon { margin-top: 17px; text-align: center; }
.add { width: 32px; height: 13px; margin-top: 21px; border-radius: 7px; background: #109160; color: #fff; text-align: center; font: bold 8.300px/13px "Noto Sans", sans-serif; letter-spacing: .15px; }
.f2 h2 { margin-left: 0; }
.f2 .picker { margin-left: 1px; }
.alarms { margin-top: 18.500px; display: flex; flex-direction: column; gap: 3.500px; }
.alarm { width: 177.500px; height: 29.500px; padding: 0 8.500px 0 11.500px; border-radius: 15px; background: #109160; color: #fff; display: flex; align-items: center; justify-content: space-between; font: bold 13.300px/20px "Noto Sans", sans-serif; letter-spacing: .3px; }
.alarm:nth-child(2) { margin-left: .5px; }
.alarm:nth-child(3) { margin-left: 1px; }
.alarm i { width: 26px; height: 13px; border-radius: 7px; background: radial-gradient(circle at 19.500px 6.500px, #fff 5.600px, #109160 6px, #109160 6.200px, transparent 6.600px), #e2fae2; }
.save { margin-top: 21.500px; padding-left: 78px; font: 600 8.500px/14px Inter, sans-serif; }

/* side menu, over the frame content */
.drawer { position: absolute; left: 0; top: 0; width: 99px; height: 440px; background: #109160; box-shadow: 0 3px 4px rgba(0, 0, 0, .3); font: 300 6.900px/10px Inter, sans-serif; color: #eefaf3; display: flex; flex-direction: column; }
.dhead { height: 39px; padding: 20px 11px 0 12px; margin-bottom: 21px; border-bottom: 1px solid #45ab84; display: flex; justify-content: space-between; }
.dh { width: 11px; height: 10.500px; }
.dx { width: 8px; height: 8px; margin-top: 2px; }
.drawer a, .settings { width: 83.500px; height: 23px; padding: 1.500px 0 0 13px; display: flex; align-items: center; gap: 4px; border-bottom: 1px solid #50b08c; white-space: nowrap; }
.drawer a svg, .settings svg { width: 10px; height: 10px; }
.drawer .home { height: 22.500px; gap: 5px; padding-top: 2px; }
.drawer .act { height: 24px; }
.drawer .appt { padding-bottom: 3px; }
.drawer .settings { margin-top: auto; margin-bottom: 29px; height: 29px; padding-top: 0; border-bottom: 0; border-top: 1px solid #359f78; }

/* scroll bars and floating helper */
.vscroll { position: absolute; left: 1355px; top: 184px; width: 6px; height: 87px; border-radius: 3px; background: rgba(60, 70, 60, .45); }
.hscroll { position: absolute; left: 785px; top: 556px; width: 260px; height: 8px; border-radius: 4px; border: 1px solid #686868; background: #141414; }
.float { position: absolute; left: 1337px; top: 427px; width: 40px; height: 29px; padding: 4px 0 0 5px; border-radius: 4px; background: #e4f8e6; box-shadow: 0 1px 4px rgba(0, 0, 0, .05); }
.float svg { width: 18px; height: 19px; opacity: .6; }

/* dock */
.dock { height: 52px; flex: none; padding-left: 4px; display: flex; align-items: center; background: linear-gradient(90deg, #25141c, #371b2a 28%, #301722 38%, #35192a 60%, #3c1b20 80%, #3a1912); }
.app { position: relative; width: 50px; height: 46px; display: grid; place-items: center; flex: none; }
.app svg { width: 28px; height: 28px; }
.app .w30 { width: 30px; }
.on::before { content: ""; position: absolute; left: 2px; top: 0; width: 46px; height: 46px; border-radius: 10px; background: rgba(255, 255, 255, .2); }
.on svg { position: relative; width: 30px; height: 30px; }
.run { position: absolute; left: 23px; bottom: 0; width: 4px; height: 4px; border-radius: 50%; background: #1a7bf0; }
.dsep { width: 1px; height: 30px; margin: 0 1px; background: #cfc6ca; }
.grid { margin-left: auto; margin-right: 19px; }
```
